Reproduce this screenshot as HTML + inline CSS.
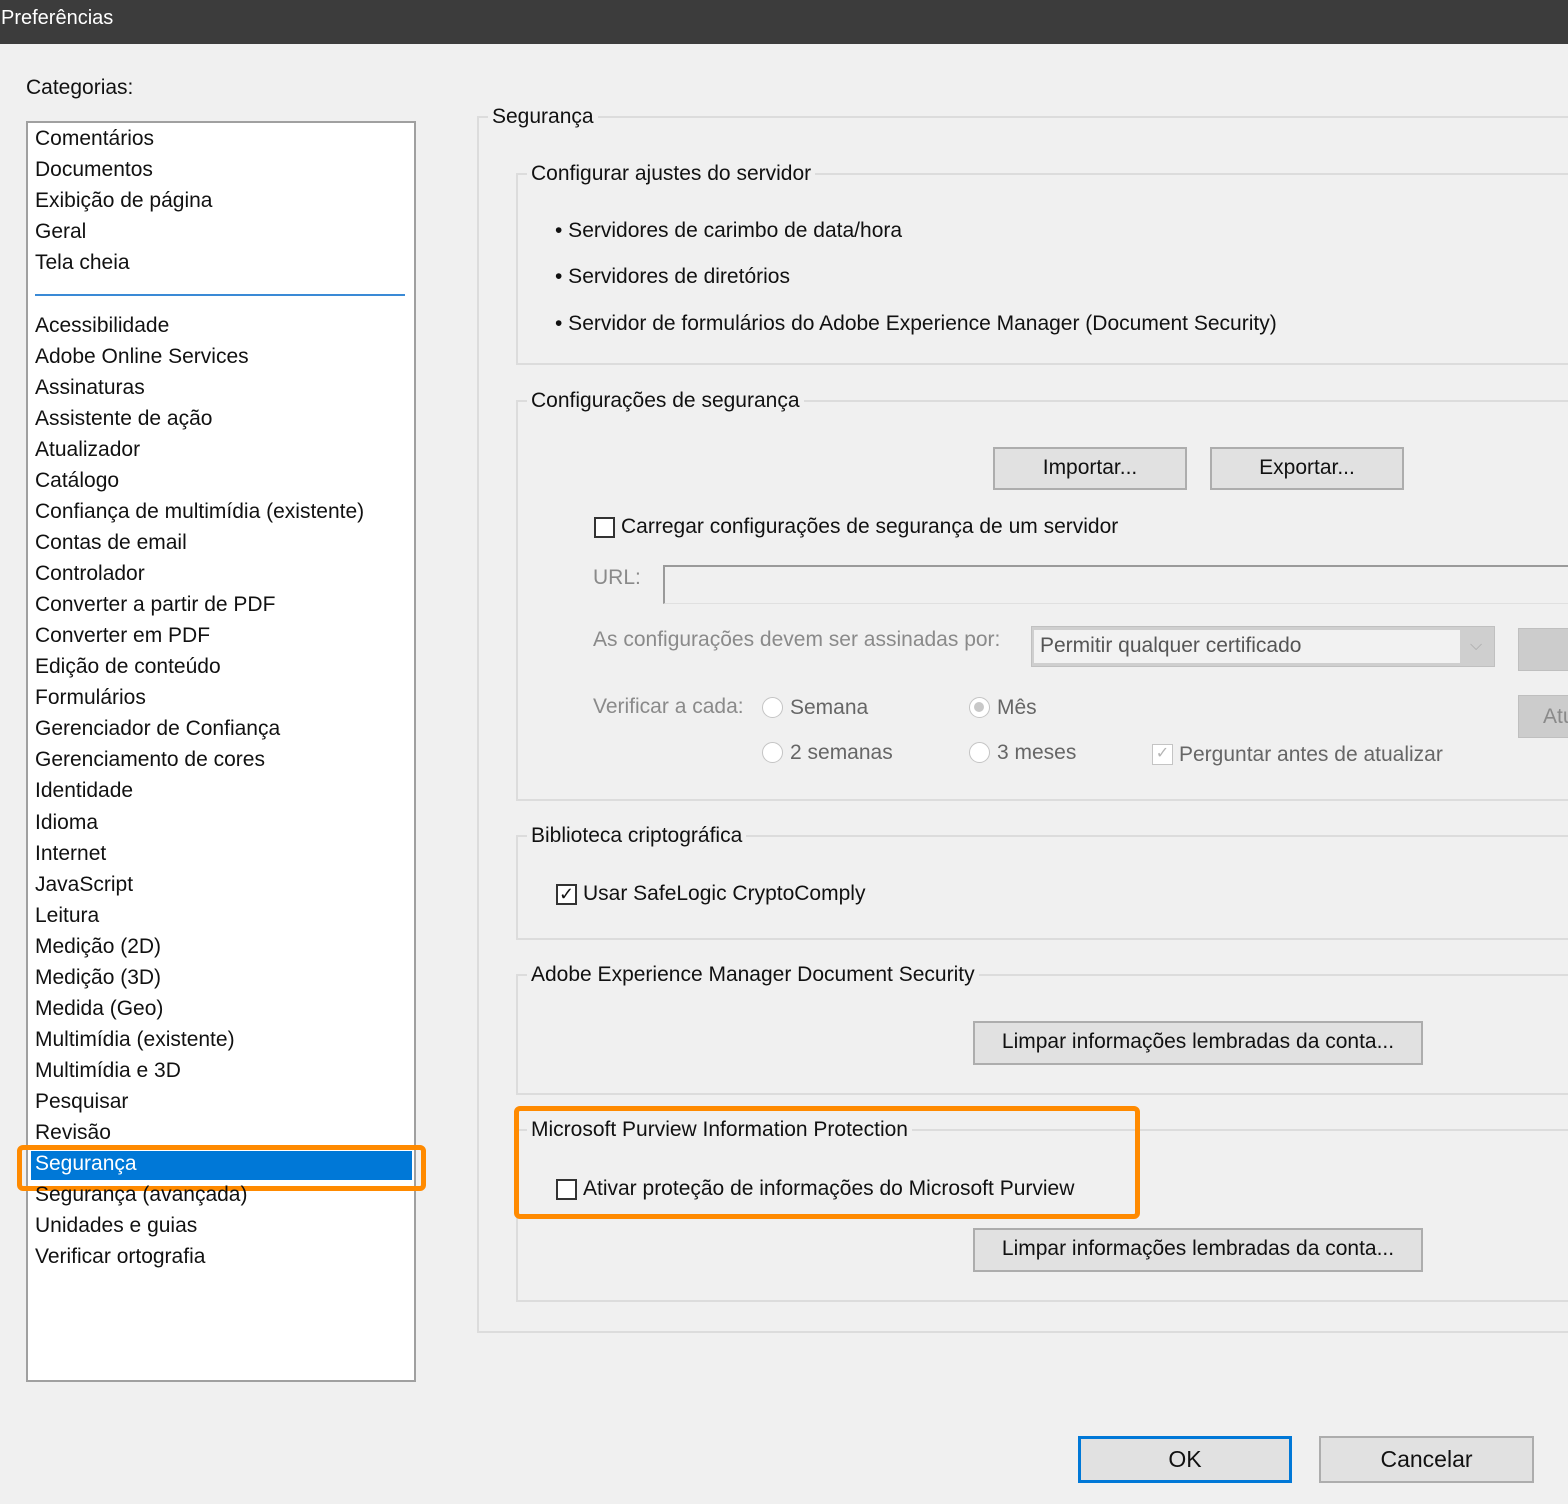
<!DOCTYPE html>
<html><head><meta charset="utf-8"><style>
*{margin:0;padding:0;box-sizing:border-box}
body{width:1568px;height:1504px;background:#f0f0f0;position:relative;overflow:hidden;font-family:"Liberation Sans",sans-serif;font-size:21px;color:#111}
.a{position:absolute;white-space:nowrap;line-height:24px}
.g{color:#8a8a8a}
.box{position:absolute;border:2px solid #dcdcdc;border-right:none}
.lg{position:absolute;background:#f0f0f0;padding:0 4px;line-height:24px;white-space:nowrap}
.btn{position:absolute;background:#e1e1e1;border:2px solid #adadad;text-align:center;line-height:38px}
.cb{position:absolute;width:21px;height:21px;border:2px solid #333;background:#fff}
.rd{position:absolute;width:21px;height:21px;border:1.5px solid #c4c4c4;border-radius:50%;background:#fff}
.li{position:absolute;left:35px;line-height:24px;white-space:nowrap}
</style></head><body>
<div style="position:absolute;left:0;top:0;width:1568px;height:44px;background:#3c3c3c"></div>
<div class="a" style="left:1px;top:6px;color:#fff;font-size:20px">Preferências</div>
<div class="a" style="left:26px;top:76px">Categorias:</div>
<div style="position:absolute;left:26px;top:121px;width:390px;height:1261px;background:#fff;border:2px solid #a0a0a0"></div>
<div style="position:absolute;left:35px;top:294px;width:370px;height:2px;background:#3a8ad6"></div>
<div style="position:absolute;left:31px;top:1151px;width:381px;height:29px;background:#0078d7"></div>
<div style="position:absolute;left:17px;top:1145px;width:409px;height:46px;border:5px solid #ff8a00;border-radius:6px"></div>
<div class="li" style="top:127px">Comentários</div>
<div class="li" style="top:158px">Documentos</div>
<div class="li" style="top:189px">Exibição de página</div>
<div class="li" style="top:220px">Geral</div>
<div class="li" style="top:251px">Tela cheia</div>
<div style="position:absolute;left:35px;top:310px;line-height:31.03px;white-space:nowrap">Acessibilidade<br>Adobe Online Services<br>Assinaturas<br>Assistente de ação<br>Atualizador<br>Catálogo<br>Confiança de multimídia (existente)<br>Contas de email<br>Controlador<br>Converter a partir de PDF<br>Converter em PDF<br>Edição de conteúdo<br>Formulários<br>Gerenciador de Confiança<br>Gerenciamento de cores<br>Identidade<br>Idioma<br>Internet<br>JavaScript<br>Leitura<br>Medição (2D)<br>Medição (3D)<br>Medida (Geo)<br>Multimídia (existente)<br>Multimídia e 3D<br>Pesquisar<br>Revisão<br><span style="color:#fff">Segurança</span><br>Segurança (avançada)<br>Unidades e guias<br>Verificar ortografia</div>

<div class="box" style="left:477px;top:116px;width:1100px;height:1217px"></div>
<div class="lg" style="left:488px;top:105px">Segurança</div>

<div class="box" style="left:516px;top:173px;width:1060px;height:192px"></div>
<div class="lg" style="left:527px;top:162px">Configurar ajustes do servidor</div>
<div class="a" style="left:555px;top:219px">• Servidores de carimbo de data/hora</div>
<div class="a" style="left:555px;top:265px">• Servidores de diretórios</div>
<div class="a" style="left:555px;top:312px">• Servidor de formulários do Adobe Experience Manager (Document Security)</div>

<div class="box" style="left:516px;top:400px;width:1060px;height:401px"></div>
<div class="lg" style="left:527px;top:389px">Configurações de segurança</div>
<div class="btn" style="left:993px;top:447px;width:194px;height:43px">Importar...</div>
<div class="btn" style="left:1210px;top:447px;width:194px;height:43px">Exportar...</div>
<div class="cb" style="left:594px;top:517px"></div>
<div class="a" style="left:621px;top:515px">Carregar configurações de segurança de um servidor</div>
<div class="a g" style="left:593px;top:566px">URL:</div>
<div style="position:absolute;left:663px;top:565px;width:910px;height:39px;border:2px solid #9a9a9a;border-right:none;border-bottom:1px solid #e0e0e0;background:#f0f0f0"></div>
<div class="a g" style="left:593px;top:628px">As configurações devem ser assinadas por:</div>
<div style="position:absolute;left:1031px;top:626px;width:464px;height:41px;background:#cfcfcf;border:1px solid #c0c0c0"></div>
<div style="position:absolute;left:1034px;top:630px;width:426px;height:33px;background:#f2f2f2"></div>
<div class="a" style="left:1040px;top:634px;color:#555">Permitir qualquer certificado</div>
<div class="a" style="left:1470px;top:634px;color:#aaa;font-size:16px">⌵</div>
<div style="position:absolute;left:1518px;top:628px;width:60px;height:43px;background:#cccccc;border:1px solid #bfbfbf"></div>
<div style="position:absolute;left:1518px;top:695px;width:60px;height:43px;background:#cccccc;border:1px solid #bfbfbf"></div>
<div class="a g" style="left:1543px;top:705px">Atu</div>
<div class="a g" style="left:593px;top:695px">Verificar a cada:</div>
<div class="rd" style="left:762px;top:697px"></div><div class="a" style="left:790px;top:696px;color:#666">Semana</div>
<div class="rd" style="left:969px;top:697px"><div style="position:absolute;left:4px;top:4px;width:10px;height:10px;border-radius:50%;background:#c8c8c8"></div></div><div class="a" style="left:997px;top:696px;color:#666">Mês</div>
<div class="rd" style="left:762px;top:742px"></div><div class="a" style="left:790px;top:741px;color:#666">2 semanas</div>
<div class="rd" style="left:969px;top:742px"></div><div class="a" style="left:997px;top:741px;color:#666">3 meses</div>
<div class="cb" style="left:1152px;top:744px;border:1.5px solid #c4c4c4;color:#b5b5b5;font-size:16px;line-height:18px;text-align:center">✓</div>
<div class="a" style="left:1179px;top:743px;color:#666">Perguntar antes de atualizar</div>

<div class="box" style="left:516px;top:835px;width:1060px;height:105px"></div>
<div class="lg" style="left:527px;top:824px">Biblioteca criptográfica</div>
<div class="cb" style="left:556px;top:884px;font-size:18px;line-height:17px;text-align:center">✓</div>
<div class="a" style="left:583px;top:882px">Usar SafeLogic CryptoComply</div>

<div class="box" style="left:516px;top:974px;width:1060px;height:121px"></div>
<div class="lg" style="left:527px;top:963px">Adobe Experience Manager Document Security</div>
<div class="btn" style="left:973px;top:1021px;width:450px;height:44px">Limpar informações lembradas da conta...</div>

<div class="box" style="left:516px;top:1129px;width:1060px;height:173px"></div>
<div class="lg" style="left:527px;top:1118px">Microsoft Purview Information Protection</div>
<div class="cb" style="left:556px;top:1179px"></div>
<div class="a" style="left:583px;top:1177px">Ativar proteção de informações do Microsoft Purview</div>
<div class="btn" style="left:973px;top:1228px;width:450px;height:44px">Limpar informações lembradas da conta...</div>
<div style="position:absolute;left:514px;top:1106px;width:626px;height:113px;border:5px solid #ff8a00;border-radius:6px"></div>

<div class="btn" style="left:1078px;top:1436px;width:214px;height:47px;border:3px solid #0078d7;line-height:41px;font-size:23px">OK</div>
<div class="btn" style="left:1319px;top:1436px;width:215px;height:47px;line-height:43px;font-size:23px">Cancelar</div>
</body></html>
